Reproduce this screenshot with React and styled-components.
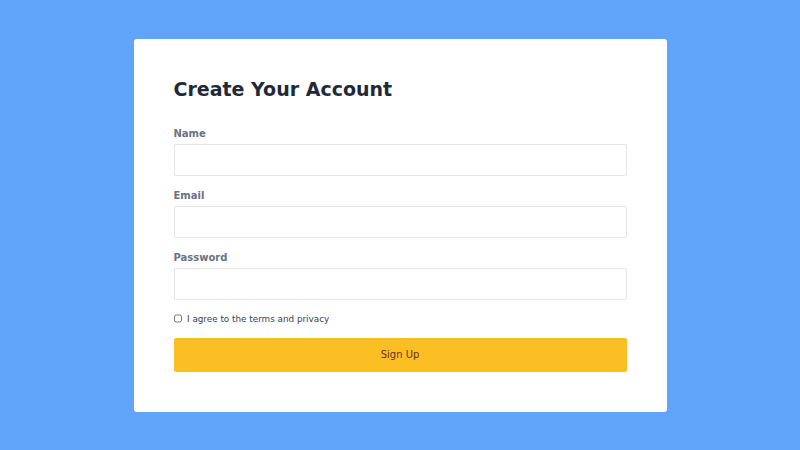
import React from "react";
import styled, { createGlobalStyle } from "styled-components";

const Global = createGlobalStyle`
  html, body { margin: 0; padding: 0; }
  body { background: #60a5fa; font-family: "DejaVu Sans", sans-serif; }
  * { box-sizing: border-box; }
`;

const Page = styled.div`
  width: 800px;
  height: 450px;
  display: flex;
  align-items: center;
  justify-content: center;
  background: #60a5fa;
`;

const Card = styled.form`
  width: 533px;
  background: #ffffff;
  border-radius: 3px;
  padding: 39px 40px 40px;
  display: flex;
  flex-direction: column;
`;

const Title = styled.h2`
  margin: 0 0 27px;
  font-size: 19px;
  line-height: 22px;
  font-weight: 700;
  color: #1f2937;
`;

const Field = styled.div`
  display: flex;
  flex-direction: column;
  margin-bottom: 13px;
`;

const Label = styled.label`
  font-size: 10px;
  line-height: 14px;
  font-weight: 700;
  color: #6b7280;
  margin-bottom: 3px;
`;

const Input = styled.input`
  height: 32px;
  border: 1px solid #e2e4e8;
  border-radius: 2px;
  padding: 0 8px;
  font-family: inherit;
  font-size: 10px;
  outline: none;
`;

const CheckRow = styled.label`
  display: flex;
  align-items: center;
  gap: 5px;
  height: 12px;
  font-size: 8.8px;
  color: #374151;
  margin: 0 0 13px;
`;

const Check = styled.input`
  width: 8.5px;
  height: 8.5px;
  margin: 0;
`;

const Button = styled.button`
  height: 34px;
  border: none;
  border-radius: 2px;
  background: #fbbf24;
  color: #6b2f1a;
  font-family: inherit;
  font-size: 10px;
  cursor: pointer;
`;

export default function App() {
  return (
    <>
      <Global />
      <Page>
        <Card onSubmit={(e) => e.preventDefault()}>
          <Title>Create Your Account</Title>
          <Field>
            <Label>Name</Label>
            <Input type="text" />
          </Field>
          <Field>
            <Label>Email</Label>
            <Input type="email" />
          </Field>
          <Field>
            <Label>Password</Label>
            <Input type="password" />
          </Field>
          <CheckRow>
            <Check type="checkbox" />
            I agree to the terms and privacy
          </CheckRow>
          <Button type="submit">Sign Up</Button>
        </Card>
      </Page>
    </>
  );
}
